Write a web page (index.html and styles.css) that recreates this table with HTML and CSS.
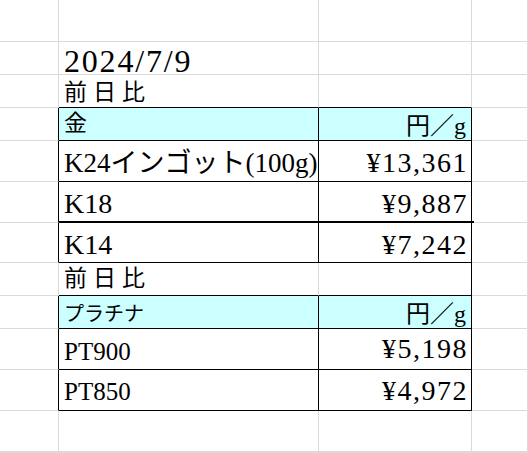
FILE: index.html
```html
<!DOCTYPE html>
<html lang="ja">
<head>
<meta charset="utf-8">
<title>金・プラチナ価格</title>
<link rel="stylesheet" href="styles.css">
</head>
<body>
<div class="sheet">
  <!-- row 1 -->
  <div class="c"></div><div class="c"></div><div class="c"></div><div class="c"></div>
  <!-- row 2 -->
  <div class="c"></div><div class="c date">2024/7/9</div><div class="c"></div><div class="c"></div>
  <!-- row 3 -->
  <div class="c"></div><div class="c zen zen-a kb">前日比</div><div class="c kb"></div><div class="c"></div>
  <!-- row 4 -->
  <div class="c kr"></div><div class="c hd kr kb metal">金</div><div class="c hd kr kb unit">円／g</div><div class="c"></div>
  <!-- row 5 -->
  <div class="c kr"></div><div class="c kr kb lbl lbl-long r5">K24インゴット(100g)</div><div class="c kr kb num r5n">¥13,361</div><div class="c"></div>
  <!-- row 6 -->
  <div class="c kr"></div><div class="c kr thick lbl r6">K18</div><div class="c kr thick thick-ext num r6">¥9,887</div><div class="c"></div>
  <!-- row 7 -->
  <div class="c kr"></div><div class="c kr kb lbl r7">K14</div><div class="c kr kb num r7">¥7,242</div><div class="c"></div>
  <!-- row 8 -->
  <div class="c"></div><div class="c kb zen zen-b">前日比</div><div class="c kr kb"></div><div class="c"></div>
  <!-- row 9 -->
  <div class="c kr"></div><div class="c hd kr kb kana">プラチナ</div><div class="c hd kr kb unit">円／g</div><div class="c"></div>
  <!-- row 10 -->
  <div class="c kr"></div><div class="c kr kb lbl pt r10">PT900</div><div class="c kr kb num r10n">¥5,198</div><div class="c"></div>
  <!-- row 11 -->
  <div class="c kr"></div><div class="c kr kb lbl pt r11">PT850</div><div class="c kr kb num r11n">¥4,972</div><div class="c"></div>
  <!-- row 12 -->
  <div class="c"></div><div class="c"></div><div class="c"></div><div class="c"></div>
  <!-- row 13 -->
  <div class="c"></div><div class="c"></div><div class="c"></div><div class="c"></div>
</div>
</body>
</html>
```
FILE: styles.css
```css
html, body {
  margin: 0;
  padding: 0;
  background: #ffffff;
}

body {
  width: 528px;
  height: 453px;
  overflow: hidden;
  font-family: "Liberation Serif", "Noto Sans CJK JP", serif;
  color: #000000;
}

.sheet {
  display: grid;
  width: 528px;
  height: 453px;
  grid-template-columns: 59px 260px 153px 1fr;
  grid-template-rows: 42px 33px 33px 33px 41px 41px 40px 33px 33px 41px 41px 41px 1fr;
}

.c {
  box-sizing: border-box;
  border-right: 1px solid #dadada;
  border-bottom: 1px solid #dadada;
  display: flex;
  align-items: flex-end;
  white-space: nowrap;
  line-height: 20px;
  padding-left: 5px;
  min-width: 0;
}

/* black table borders */
.kr { border-right-color: #000000; }
.kb { border-bottom-color: #000000; }
.thick { border-bottom: 2px solid #000000; }

/* the double line runs a little past the table edge */
.thick-ext { position: relative; }
.thick-ext::after {
  content: "";
  position: absolute;
  right: -3px;
  bottom: -2px;
  width: 3px;
  height: 2px;
  background: #000000;
}

/* header fill */
.hd { background: #ccffff; }

/* date */
.date {
  font-size: 32px;
  letter-spacing: 1.8px;
  padding-bottom: 3px;
}

/* 前日比 */
.zen {
  font-size: 23px;
  letter-spacing: 6px;
}
.zen-a { padding-bottom: 4px; }
.zen-b { padding-bottom: 6px; }

/* header labels */
.metal {
  font-size: 23px;
  padding-bottom: 6px;
}
.kana {
  font-size: 20px;
  padding-bottom: 4px;
}
.unit {
  font-size: 24px;
  justify-content: flex-end;
  padding-right: 5px;
  padding-bottom: 4.5px;
}

/* item labels */
.lbl { font-size: 28px; }
.lbl-long { font-size: 27px; }
.pt { font-size: 25px; }

/* prices */
.num {
  font-size: 28px;
  letter-spacing: 1.5px;
  justify-content: flex-end;
  padding-right: 3px;
}

/* baselines per row */
.r5 { padding-bottom: 8px; }
.r5n { padding-bottom: 8.5px; }
.r6 { padding-bottom: 7.5px; }
.r7 { padding-bottom: 7px; }
.r10 { padding-bottom: 7px; }
.r10n { padding-bottom: 10px; }
.r11 { padding-bottom: 8px; }
.r11n { padding-bottom: 9.5px; }
```
